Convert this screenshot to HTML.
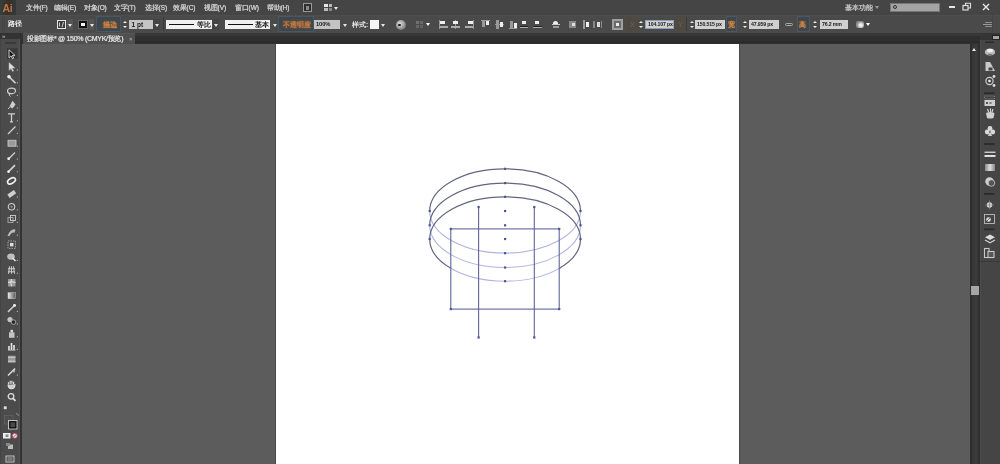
<!DOCTYPE html>
<html><head><meta charset="utf-8">
<style>
*{margin:0;padding:0;box-sizing:border-box}
html,body{width:1000px;height:464px;overflow:hidden;background:#595959;font-family:"Liberation Sans",sans-serif}
#root{position:absolute;left:0;top:0;width:1000px;height:464px;overflow:hidden;filter:blur(0.5px)}
.a{position:absolute}
#menubar{left:0;top:0;width:1000px;height:15px;background:#454545}
#ctrl{left:0;top:15px;width:1000px;height:18px;background:#4a4a4a;border-top:1px solid #4e4e4e}
#tabbar{left:0;top:33px;width:1000px;height:11px;background:#2f2f2f}
#tabtop{left:0;top:33px;width:1000px;height:3px;background:#383838}
#tabbot{left:0;top:41px;width:1000px;height:2px;background:#2b2b2b}
#canvas{left:22px;top:44px;width:948px;height:420px;background:#5c5c5c}
#page{left:276px;top:44px;width:463px;height:420px;background:#fff}
#pageL{left:275px;top:44px;width:1px;height:420px;background:#484848}
#pageR{left:739px;top:44px;width:1px;height:420px;background:#484848}
#toolbar{left:0;top:33px;width:22px;height:431px;background:#4b4b4b}
#scroll{left:970px;top:44px;width:10px;height:420px;background:#3a3a3a}
#dock{left:980px;top:40px;width:20px;height:424px;background:#474747}
.mt{position:absolute;top:3px;font-size:6.5px;letter-spacing:-0.1px;line-height:10px;color:#d2d2d2;-webkit-text-stroke:0.15px #d2d2d2;text-shadow:0 0 1px rgba(200,200,200,0.7);white-space:nowrap}
.ct{position:absolute;font-size:7px;line-height:9px;color:#e0e0e0;white-space:nowrap}
.dd{position:absolute;width:0;height:0;border-left:2px solid transparent;border-right:2px solid transparent;border-top:3px solid #e8e8e8}
.up{position:absolute;width:0;height:0;border-left:2px solid transparent;border-right:2px solid transparent;border-bottom:2.6px solid #ececec;margin-top:0.5px;margin-left:0}
.inp{position:absolute;top:20px;height:9px;background:#c4c4c4;font-size:5.2px;line-height:9px;color:#1a1a1a;font-weight:bold;letter-spacing:-0.15px;padding-left:2px;white-space:nowrap;overflow:hidden}
.olab{position:absolute;font-size:6.8px;line-height:9px;color:#d08848;font-weight:bold;text-shadow:0 0 2px rgba(210,130,60,0.7);white-space:nowrap}
.ic{position:absolute;background:#a8a8a8}
.dn{position:absolute;width:0;height:0;border-left:2px solid transparent;border-right:2px solid transparent;border-top:2.6px solid #ececec;margin-left:0}
</style></head><body><div id="root">
<div id="menubar" class="a"></div>
<div id="ctrl" class="a"></div>
<div id="tabbar" class="a"></div>
<div id="tabtop" class="a"></div><div id="tabbot" class="a"></div>
<div id="canvas" class="a"></div>
<div id="page" class="a"></div>
<div id="pageL" class="a"></div>
<div id="pageR" class="a"></div>
<div id="toolbar" class="a"></div>
<div id="scroll" class="a"></div>
<div id="dock" class="a"></div>

<!-- ================= MENU BAR ================= -->
<div class="a" style="left:0;top:0;width:16px;height:15px;background:linear-gradient(90deg,#34403f,#3c3028 40%,#3a3028 60%,#303a3c)"></div>
<div class="a" style="left:2.5px;top:1.5px;font-size:10.5px;line-height:12px;color:#b87846;font-weight:bold;letter-spacing:-0.3px">Ai</div>
<div class="mt" style="left:25.8px">文件(F)</div>
<div class="mt" style="left:53.8px">编辑(E)</div>
<div class="mt" style="left:83.8px">对象(O)</div>
<div class="mt" style="left:113.8px">文字(T)</div>
<div class="mt" style="left:144.8px">选择(S)</div>
<div class="mt" style="left:172.8px">效果(C)</div>
<div class="mt" style="left:203.8px">视图(V)</div>
<div class="mt" style="left:234.8px">窗口(W)</div>
<div class="mt" style="left:266.8px">帮助(H)</div>
<div class="a" style="left:303px;top:3px;width:9px;height:9px;border:1px solid #9a9a9a;background:#2e2e2e"></div>
<div class="a" style="left:306px;top:5.5px;width:3px;height:4px;background:#8a8a8a"></div>
<div class="a" style="left:324px;top:4px;width:4px;height:3px;background:#e6e6e6"></div><div class="a" style="left:328.5px;top:4px;width:3.5px;height:3px;background:#bbb"></div><div class="a" style="left:324px;top:7.5px;width:4px;height:3px;background:#bbb"></div><div class="a" style="left:328.5px;top:7.5px;width:3.5px;height:3px;background:#888"></div>
<div class="dd" style="left:334px;top:6.5px"></div>
<div class="mt" style="left:845px;color:#bdbdbd">基本功能</div>
<div class="dd" style="left:875px;top:6px;border-top-color:#999"></div>
<div class="a" style="left:890px;top:3px;width:50px;height:9px;background:#a4a4a4;border:1px solid #777"></div>
<div class="a" style="left:893px;top:5px;width:4px;height:4px;border:1px solid #333;border-radius:50%"></div>
<div class="a" style="left:949px;top:5.5px;width:6px;height:2px;background:#e6e6e6"></div>
<svg class="a" style="left:962px;top:2px" width="10" height="10"><rect x="1" y="3.5" width="5" height="4.5" fill="none" stroke="#ddd" stroke-width="1.2"/><path d="M3.5 3.5 V1.2 H8.5 V6 H6" fill="none" stroke="#ddd" stroke-width="1.1"/></svg>
<svg class="a" style="left:981px;top:2px" width="10" height="10"><path d="M2 2 L8 8 M8 2 L2 8" stroke="#e6e6e6" stroke-width="1.4"/></svg>

<!-- ================= CONTROL BAR ================= -->
<div class="a" style="left:2px;top:17px;width:1px;height:14px;background:#434343"></div>
<div class="a" style="left:4px;top:17px;width:1px;height:14px;background:#434343"></div>
<div class="ct" style="left:8px;top:19px;color:#f6f6f6;font-size:6.6px;font-weight:bold">路径</div>
<!-- fill swatch -->
<div class="a" style="left:57px;top:20px;width:9px;height:9px;border:1px solid #e8e8e8;background:#3c3c3c"></div>
<svg class="a" style="left:57px;top:20px" width="9" height="9"><path d="M6.5 2 L5 7.2 M2.5 2.5 L2.5 6.5" stroke="#cfcfcf" stroke-width="1"/></svg>
<div class="a" style="left:67px;top:19px;width:6px;height:11px;background:#555"></div>
<div class="dd" style="left:68px;top:24px"></div>
<!-- stroke swatch -->
<div class="a" style="left:78px;top:20px;width:10px;height:9px;background:#666"></div>
<div class="a" style="left:79px;top:21px;width:8px;height:7px;border:2px solid #111;background:#f4f4f4"></div>
<div class="a" style="left:89px;top:19px;width:5px;height:11px;background:#555"></div>
<div class="dd" style="left:90px;top:24px"></div>
<!-- stroke label -->
<div class="a" style="left:96px;top:16px;width:25px;height:16px;background:#41464a;border:1px solid #4a5866"></div>
<div class="olab" style="left:103px;top:20px">描边</div>
<div class="up" style="left:123px;top:20px"></div>
<div class="dn" style="left:123px;top:26px"></div>
<div class="inp" style="left:129px;width:24px;font-size:6.5px;letter-spacing:0;padding-left:2.5px">1 pt</div>
<div class="a" style="left:153px;top:19px;width:7px;height:11px;background:#444"></div>
<div class="dd" style="left:155px;top:24px"></div>
<div class="a" style="left:163px;top:17px;width:1px;height:14px;background:#3a3a3a"></div>
<!-- profile box -->
<div class="a" style="left:166px;top:20px;width:46px;height:9px;background:#f0f0f0"></div>
<div class="a" style="left:169px;top:24px;width:25px;height:1px;background:#111"></div>
<div class="ct" style="left:197px;top:20px;color:#151515;font-weight:bold;font-size:6.6px">等比</div>
<div class="a" style="left:212px;top:19px;width:7px;height:11px;background:#444"></div>
<div class="dd" style="left:214px;top:24px"></div>
<!-- brush box -->
<div class="a" style="left:225px;top:20px;width:45px;height:9px;background:#f0f0f0"></div>
<div class="a" style="left:228px;top:24px;width:25px;height:1px;background:#111"></div>
<div class="ct" style="left:255px;top:20px;color:#151515;font-weight:bold;font-size:6.6px">基本</div>
<div class="dd" style="left:273px;top:24px"></div>
<!-- opacity label -->
<div class="a" style="left:278px;top:16px;width:36px;height:16px;background:#41464a;border:1px solid #4a5866"></div>
<div class="olab" style="left:283px;top:20px;color:#c07a40;text-shadow:0 0 2.5px rgba(200,120,60,0.9)">不透明度</div>
<div class="inp" style="left:314px;width:26px;font-size:5.8px;letter-spacing:-0.1px">100%</div>
<div class="dd" style="left:343px;top:24px"></div>
<div class="ct" style="left:352px;top:20px;color:#e6e6e6;font-weight:bold;font-size:6.6px">样式:</div>
<div class="a" style="left:370px;top:20px;width:9px;height:9px;background:#f4f4f4"></div>
<div class="dd" style="left:381px;top:24px"></div>
<div class="a" style="left:396px;top:19.5px;width:10px;height:10px;border-radius:50%;background:radial-gradient(circle at 40% 40%,#e0e0e0 0,#b0b0b0 35%,#707070 80%,#555 100%)"></div><div class="a" style="left:398px;top:23.5px;width:2.5px;height:2.5px;border-radius:50%;background:#222"></div>

<!-- icons after recolor -->
<div class="a" style="left:416px;top:21px;width:3px;height:3px;background:#707070"></div>
<div class="a" style="left:420px;top:21px;width:3px;height:3px;background:#6a6a6a"></div>
<div class="a" style="left:416px;top:25px;width:3px;height:3px;background:#666"></div>
<div class="a" style="left:420px;top:25px;width:3px;height:3px;background:#606060"></div>
<div class="dd" style="left:426px;top:23px;border-top-color:#fff"></div>
<!-- align icons -->
<div class="a" style="left:439px;top:20px;width:1px;height:9px;background:#999"></div>
<div class="a" style="left:440px;top:21px;width:5px;height:3px;background:#eee"></div>
<div class="a" style="left:440px;top:26px;width:8px;height:2px;background:#aaa"></div>
<div class="a" style="left:455px;top:20px;width:1px;height:9px;background:#999"></div>
<div class="a" style="left:453px;top:21px;width:5px;height:3px;background:#eee"></div>
<div class="a" style="left:451px;top:26px;width:9px;height:2px;background:#aaa"></div>
<div class="a" style="left:473px;top:20px;width:1px;height:9px;background:#999"></div>
<div class="a" style="left:468px;top:21px;width:5px;height:3px;background:#eee"></div>
<div class="a" style="left:465px;top:26px;width:8px;height:2px;background:#aaa"></div>
<div class="a" style="left:481px;top:20px;width:9px;height:1px;background:#999"></div>
<div class="a" style="left:482px;top:21px;width:3px;height:6px;background:#999"></div>
<div class="a" style="left:486px;top:21px;width:3px;height:4px;background:#eee"></div>
<div class="a" style="left:495px;top:24px;width:9px;height:1px;background:#999"></div>
<div class="a" style="left:496px;top:20px;width:3px;height:9px;background:#999"></div>
<div class="a" style="left:500px;top:22px;width:3px;height:5px;background:#eee"></div>
<div class="a" style="left:509px;top:28px;width:8px;height:1px;background:#999"></div>
<div class="a" style="left:510px;top:21px;width:3px;height:7px;background:#999"></div>
<div class="a" style="left:514px;top:23px;width:3px;height:5px;background:#eee"></div>
<div class="a" style="left:522px;top:21px;width:4px;height:3px;background:#eee"></div>
<div class="a" style="left:520px;top:26px;width:8px;height:1px;background:#222"></div>
<div class="a" style="left:520px;top:27px;width:8px;height:1px;background:#aaa"></div>
<div class="a" style="left:535px;top:21px;width:4px;height:3px;background:#eee"></div>
<div class="a" style="left:533px;top:26px;width:9px;height:1px;background:#222"></div>
<div class="a" style="left:533px;top:27px;width:9px;height:1px;background:#aaa"></div>
<div class="a" style="left:553px;top:21px;width:5px;height:3px;border-radius:3px 3px 0 0;background:#eee"></div>
<div class="a" style="left:552px;top:24px;width:8px;height:1px;background:#ccc"></div>
<div class="a" style="left:553px;top:26px;width:6px;height:2px;background:#999"></div>
<div class="a" style="left:569px;top:21px;width:7px;height:7px;background:#888"></div>
<div class="a" style="left:572px;top:23px;width:3px;height:3px;background:#ddd"></div>
<div class="a" style="left:583px;top:20px;width:2px;height:9px;background:#999"></div>
<div class="a" style="left:586px;top:22px;width:3px;height:5px;background:#eee"></div>
<div class="a" style="left:593px;top:21px;width:2px;height:7px;background:#888"></div>
<div class="a" style="left:597px;top:22px;width:3px;height:5px;background:#ddd"></div>
<div class="a" style="left:601px;top:21px;width:1px;height:7px;background:#888"></div>
<!-- transform icon -->
<div class="a" style="left:612px;top:19px;width:11px;height:11px;border:2px solid #a0a0a0;background:#6a6a6a"></div>
<div class="a" style="left:616px;top:23px;width:3px;height:3px;background:#eee"></div>
<!-- X -->
<div class="a" style="left:624px;top:16px;width:16px;height:16px;background:#4e4942"></div>
<div class="ct" style="left:630px;top:20px;color:#6e6254">X</div>
<div class="up" style="left:639px;top:20px"></div>
<div class="dn" style="left:639px;top:26px"></div>
<div class="inp" style="left:645px;width:29px;border:1px solid #8ea0b8;line-height:7px;background:#d0d0d0">104.107 px</div>
<div class="a" style="left:675px;top:16px;width:11px;height:16px;background:#4e4942"></div>
<div class="ct" style="left:678px;top:20px;color:#6e6254">Y</div>
<div class="a" style="left:686px;top:17px;width:1px;height:14px;background:#3a3a3a"></div>
<div class="up" style="left:690px;top:20px"></div>
<div class="dn" style="left:690px;top:26px"></div>
<div class="inp" style="left:695px;width:30px;line-height:9px;background:#d0d0d0">150.515 px</div>
<!-- W -->
<div class="a" style="left:726px;top:16px;width:11px;height:16px;background:#41464a;border:1px solid #4a5866"></div>
<div class="olab" style="left:728px;top:20px">宽</div>
<div class="up" style="left:743px;top:20px"></div>
<div class="dn" style="left:743px;top:26px"></div>
<div class="inp" style="left:749px;width:30px;background:#d0d0d0">47.959 px</div>
<div class="a" style="left:785px;top:23px;width:8px;height:3px;border:1px solid #aaa;border-radius:2px"></div>
<!-- H -->
<div class="a" style="left:797px;top:16px;width:13px;height:16px;background:#41464a;border:1px solid #4a5866"></div>
<div class="olab" style="left:799px;top:20px">高</div>
<div class="up" style="left:813px;top:20px"></div>
<div class="dn" style="left:813px;top:26px"></div>
<div class="inp" style="left:820px;width:28px;background:#d0d0d0">76.2 mm</div>
<div class="a" style="left:856px;top:21px;width:8px;height:7px;border-radius:2px;background:radial-gradient(circle at 60% 60%,#eee 20%,#888 60%)"></div>
<div class="dd" style="left:866px;top:23px;border-top-color:#fff"></div>
<!-- control bar right menu -->
<div class="a" style="left:985px;top:22px;width:7px;height:1px;background:#8e8e8e"></div>
<div class="a" style="left:983px;top:24px;width:9px;height:1px;background:#9a9a9a"></div>
<div class="a" style="left:985px;top:26px;width:7px;height:1px;background:#8e8e8e"></div>
<div class="a" style="left:992px;top:15px;width:1px;height:18px;background:#434343"></div>

<!-- ================= TOOLBAR ================= -->
<div class="a" style="left:0;top:33px;width:21px;height:6px;background:#333"></div>
<div class="a" style="left:2px;top:34px;font-size:6px;line-height:5px;color:#ccc">»</div>
<div class="a" style="left:0;top:39px;width:20px;height:425px;background:#4b4b4b;border-left:1px solid #444;border-right:1px solid #555"></div>
<div class="a" style="left:5px;top:42px;width:11px;height:2px;background:#3a3a3a"></div>
<div class="a" style="left:20px;top:33px;width:2px;height:431px;background:#333"></div>
<svg class="a" style="left:0;top:0" width="22" height="464" viewBox="0 0 22 464"><defs><linearGradient id="grd"><stop offset="0" stop-color="#eee"/><stop offset="1" stop-color="#555"/></linearGradient></defs><g transform="matrix(1,0,0,0.99655,0,1.47)"><rect x="7" y="47.0" width="10.5" height="10.5" fill="#383838"/><g transform="translate(6.5,47.50)"><path d="M2.5 1 L2.5 9 L4.5 7 L6 10 L7.2 9.4 L5.8 6.6 L8.5 6.6 Z" fill="#111" stroke="#ddd" stroke-width="0.9"/></g><g transform="translate(6.5,60.25)"><path d="M2.5 1 L2.5 9 L4.5 7 L6 10 L7.2 9.4 L5.8 6.6 L8.5 6.6 Z" fill="#e0e0e0" stroke="#aaa" stroke-width="0.5"/></g><path d="M16.5 69.25 l1.5 0 l0 -1.5z" fill="#bbb"/><g transform="translate(6.5,73.00)"><path d="M2 2 L9 9" stroke="#cfcfcf" stroke-width="1.6"/><circle cx="2.5" cy="2.5" r="1.8" fill="#eee"/></g><path d="M16.5 82.00 l1.5 0 l0 -1.5z" fill="#bbb"/><g transform="translate(6.5,85.75)"><ellipse cx="5" cy="4" rx="4" ry="2.8" fill="none" stroke="#cfcfcf" stroke-width="1.2"/><path d="M3 6 Q2 9 4 9.5" fill="none" stroke="#cfcfcf" stroke-width="1"/></g><path d="M16.5 94.75 l1.5 0 l0 -1.5z" fill="#bbb"/><g transform="translate(6.5,98.50)"><path d="M6 1 L9 5 L6 9 L3 7 Z" fill="#cfcfcf"/><path d="M1.5 9.5 L4 7" stroke="#cfcfcf" stroke-width="1"/></g><path d="M16.5 107.50 l1.5 0 l0 -1.5z" fill="#bbb"/><g transform="translate(6.5,111.25)"><path d="M1.5 1.5 H8.5 M5 1.5 V9.5 M3.5 9.5 H6.5" stroke="#cfcfcf" stroke-width="1.3" fill="none"/></g><path d="M16.5 120.25 l1.5 0 l0 -1.5z" fill="#bbb"/><g transform="translate(6.5,124.00)"><path d="M1.5 9 L9 1.5" stroke="#cfcfcf" stroke-width="1.2"/></g><path d="M16.5 133.00 l1.5 0 l0 -1.5z" fill="#bbb"/><g transform="translate(6.5,136.75)"><rect x="1.5" y="2.5" width="8" height="6" fill="#9a9a9a" stroke="#cfcfcf" stroke-width="0.8"/></g><path d="M16.5 145.75 l1.5 0 l0 -1.5z" fill="#bbb"/><g transform="translate(6.5,149.50)"><path d="M1.5 9 L8.5 2" stroke="#cfcfcf" stroke-width="1.3"/><circle cx="2.2" cy="8.3" r="1.4" fill="#eee"/></g><path d="M16.5 158.50 l1.5 0 l0 -1.5z" fill="#bbb"/><g transform="translate(6.5,162.25)"><path d="M1.5 9 L8.5 2" stroke="#cfcfcf" stroke-width="1.8"/><circle cx="2" cy="8.5" r="1.2" fill="#fff"/></g><path d="M16.5 171.25 l1.5 0 l0 -1.5z" fill="#bbb"/><g transform="translate(6.5,175.00)"><ellipse cx="5" cy="5" rx="4.3" ry="2.5" transform="rotate(-30 5 5)" fill="none" stroke="#eee" stroke-width="1.6"/></g><g transform="translate(6.5,187.75)"><rect x="1" y="3.5" width="8" height="4" transform="rotate(-35 5 5)" fill="#cfcfcf"/></g><path d="M16.5 196.75 l1.5 0 l0 -1.5z" fill="#bbb"/><g transform="translate(6.5,200.50)"><circle cx="5" cy="5.5" r="3.2" fill="none" stroke="#cfcfcf" stroke-width="1.1"/><circle cx="5" cy="5.5" r="1" fill="#999"/></g><path d="M16.5 209.50 l1.5 0 l0 -1.5z" fill="#bbb"/><g transform="translate(6.5,213.25)"><rect x="1.5" y="3.5" width="5" height="5" fill="none" stroke="#aaa" stroke-width="0.9"/><rect x="4" y="1.5" width="5" height="5" fill="none" stroke="#cfcfcf" stroke-width="0.9"/></g><path d="M16.5 222.25 l1.5 0 l0 -1.5z" fill="#bbb"/><g transform="translate(6.5,226.00)"><path d="M1 9 Q5 1 9 3 L8 6 Q5 5 3 9.5Z" fill="#bbb"/></g><path d="M16.5 235.00 l1.5 0 l0 -1.5z" fill="#bbb"/><g transform="translate(6.5,238.75)"><rect x="1.5" y="1.5" width="7.5" height="7.5" fill="none" stroke="#aaa" stroke-width="0.9" stroke-dasharray="1.5 1"/><rect x="3.5" y="3.5" width="3.5" height="3.5" fill="#ddd"/></g><g transform="translate(6.5,251.50)"><ellipse cx="4.5" cy="4.5" rx="3.8" ry="3.2" fill="#bdbdbd"/><path d="M6 6 L9 9" stroke="#eee" stroke-width="1.4"/></g><path d="M16.5 260.50 l1.5 0 l0 -1.5z" fill="#bbb"/><g transform="translate(6.5,264.25)"><path d="M2 9 L3 1.5 M5 9 V1.5 M8 9 L7 1.5 M1.5 4 H8.5 M1.5 7 H8.5" stroke="#cfcfcf" stroke-width="1" fill="none"/></g><path d="M16.5 273.25 l1.5 0 l0 -1.5z" fill="#bbb"/><g transform="translate(6.5,277.00)"><rect x="1.5" y="1.5" width="7.5" height="7.5" fill="#999"/><path d="M1.5 5 Q5 3.5 9 5 M5 1.5 Q3.8 5 5 9" stroke="#eee" stroke-width="0.9" fill="none"/></g><g transform="translate(6.5,289.75)"><rect x="1.5" y="2.5" width="7.5" height="6" fill="url(#grd)" stroke="#ccc" stroke-width="0.5"/></g><g transform="translate(6.5,302.50)"><path d="M1.5 9 L7.5 3" stroke="#cfcfcf" stroke-width="1.5"/><circle cx="8" cy="2.5" r="1.5" fill="#eee"/></g><path d="M16.5 311.50 l1.5 0 l0 -1.5z" fill="#bbb"/><g transform="translate(6.5,315.25)"><circle cx="3.5" cy="4" r="2.6" fill="#c4c4c4"/><circle cx="7" cy="6.5" r="2.3" fill="#2a2a2a" stroke="#bbb" stroke-width="0.8"/></g><path d="M16.5 324.25 l1.5 0 l0 -1.5z" fill="#bbb"/><g transform="translate(6.5,328.00)"><rect x="2.5" y="4" width="5.5" height="5.5" fill="#c4c4c4"/><rect x="4" y="1.5" width="2.5" height="2.5" fill="#ddd"/></g><path d="M16.5 337.00 l1.5 0 l0 -1.5z" fill="#bbb"/><g transform="translate(6.5,340.75)"><path d="M2.5 9 V5 M5 9 V2 M7.5 9 V4" stroke="#e6e6e6" stroke-width="1.6"/><path d="M1.5 9.3 H9" stroke="#bbb" stroke-width="0.8"/></g><path d="M16.5 349.75 l1.5 0 l0 -1.5z" fill="#bbb"/><g transform="translate(6.5,353.50)"><rect x="1.5" y="2" width="7.5" height="7" fill="#9a9a9a"/><path d="M1.5 3.5 H9 M1.5 7.5 H9" stroke="#ddd" stroke-width="0.8"/></g><g transform="translate(6.5,366.25)"><path d="M1.5 9 L8.5 2" stroke="#ddd" stroke-width="1.4"/><path d="M5 5.5 L9 2.5 L8 6Z" fill="#bbb"/></g><path d="M16.5 375.25 l1.5 0 l0 -1.5z" fill="#bbb"/><g transform="translate(6.5,379.00)"><path d="M2 5 V3 M3.7 4.5 V1.5 M5.4 4.5 V1.5 M7.1 5 V2.5 M1.5 5.5 Q2 9.5 5 9.5 Q8.5 9.5 8.5 5" stroke="#ddd" stroke-width="1.2" fill="#ccc"/></g><g transform="translate(6.5,391.75)"><circle cx="4.5" cy="4.5" r="2.8" fill="none" stroke="#ddd" stroke-width="1.3"/><path d="M6.5 6.5 L9 9" stroke="#ddd" stroke-width="1.8"/></g></g>
<rect x="3.5" y="406" width="3.5" height="3.5" fill="#ddd" stroke="#333" stroke-width="0.5"/>
<rect x="4.5" y="415.5" width="8.5" height="8.5" fill="#4e4e4e" stroke="#626262" stroke-width="0.8"/>
<rect x="8.5" y="420.5" width="8.5" height="8.5" fill="#4a4a4a" stroke="#d0d0d0" stroke-width="0.9"/>
<rect x="9.8" y="421.8" width="5.9" height="5.9" fill="none" stroke="#151515" stroke-width="1.3"/>
<path d="M16 413.5 q2.5 0 2.5 2.5" stroke="#aaa" stroke-width="0.7" fill="none"/>
<rect x="3" y="433" width="7.5" height="5.5" fill="#eee"/>
<rect x="5.5" y="434.5" width="3" height="2.5" fill="#888"/>
<circle cx="14.8" cy="435.8" r="2.5" fill="#f0e8ea" stroke="#c04a60" stroke-width="0.9"/>
<path d="M13.1 437.5 L16.5 434.1" stroke="#c04a60" stroke-width="1"/>
<rect x="8" y="444.5" width="5" height="4.5" fill="#bbb"/>
<rect x="6" y="443" width="4" height="3" fill="#888"/>
<rect x="6" y="456" width="8" height="6" fill="none" stroke="#ccc" stroke-width="0.9"/>
<path d="M7.5 458 H12.5 M7.5 460 H12.5" stroke="#bbb" stroke-width="0.8"/>
</svg>
<!-- ================= TAB BAR ================= -->
<div class="a" style="left:23px;top:33px;width:112px;height:11px;background:#505050;border-top:1px solid #565656"></div>
<div class="a" style="left:27px;top:34px;font-size:7px;line-height:10px;color:#e2e2e2;-webkit-text-stroke:0.15px #e2e2e2;text-shadow:0 0 1px rgba(210,210,210,0.6);white-space:nowrap;letter-spacing:-0.28px">投影图标* @ 150% (CMYK/预览)</div>
<div class="a" style="left:129px;top:34px;font-size:6px;line-height:10px;color:#bbb">×</div>

<!-- ================= SCROLL + DOCK ================= -->
<div class="a" style="left:970px;top:44px;width:10px;height:420px;background:linear-gradient(90deg,#2e2e2e 0,#2e2e2e 1.5px,#363636 1.5px,#3a3a3a 5px,#3d3d3d 7px,#303030 8px,#2e2e2e 10px)"></div>
<div class="a" style="left:972px;top:48px;width:0;height:0;border-left:2.5px solid transparent;border-right:2.5px solid transparent;border-bottom:3px solid #e8e8e8"></div>
<div class="a" style="left:971px;top:286px;width:8px;height:9px;background:#a6a6a6"></div>
<div class="a" style="left:980px;top:40px;width:20px;height:424px;background:#454545;border-left:1px solid #4c4c4c"></div>
<div class="a" style="left:980px;top:33px;width:20px;height:7px;background:#353535"></div>
<div class="a" style="left:993px;top:35.5px;width:5.5px;height:3px;background:#a4a4a4;outline:0.5px solid #222"></div>
<div class="a" style="left:980px;top:261px;width:20px;height:1px;background:#3a3a3a"></div>
<svg class="a" style="left:980px;top:0" width="20" height="464" viewBox="980 0 20 464">
<g fill="#2a2a2a">
<rect x="985" y="41.5" width="9" height="1.5"/>
<rect x="984" y="92.4" width="10.5" height="1.7"/>
<rect x="984" y="143.2" width="10.5" height="1.7"/>
<rect x="984" y="193" width="10.5" height="1.7"/>
<rect x="984" y="228.5" width="10.5" height="1.7"/>
</g>
<!-- color -->
<ellipse cx="990" cy="52" rx="5.2" ry="3.6" fill="#bdbdbd"/>
<ellipse cx="990" cy="50.5" rx="3" ry="1.8" fill="#f0f0f0"/>
<ellipse cx="990" cy="54.5" rx="2.5" ry="0.8" fill="#777"/>
<!-- color guide -->
<path d="M985.5 62 L990 62 L995 71 L985.5 71 Z" fill="#c8c8c8"/>
<rect x="988.5" y="67.5" width="4" height="3" fill="#444"/>
<!-- third -->
<circle cx="989.5" cy="81" r="3.6" fill="none" stroke="#ccc" stroke-width="1.2"/>
<circle cx="989.5" cy="81" r="1.3" fill="#eee"/>
<circle cx="994" cy="76.5" r="1.4" fill="#ddd"/>
<circle cx="994" cy="85.5" r="1.4" fill="#ddd"/>
<!-- swatches -->
<rect x="984.5" y="96" width="10" height="3" fill="none" stroke="#999" stroke-width="0.7" stroke-dasharray="1 1"/>
<rect x="984.5" y="100" width="10.5" height="6" fill="#cfcfcf"/>
<rect x="986" y="102" width="2" height="2" fill="#555"/><rect x="989.5" y="102" width="2" height="2" fill="#777"/>
<!-- brushes -->
<path d="M987.5 109 L988.5 112 M990.5 108.5 L990.5 112 M993 109 L992 112" stroke="#ddd" stroke-width="1.1"/>
<path d="M986 113 Q990 111 994.5 113 L993.5 118 Q990 119 987 118 Z" fill="#d0d0d0"/>
<!-- symbols -->
<circle cx="990" cy="128.5" r="2.4" fill="#d8d8d8"/>
<circle cx="987.2" cy="132" r="2.4" fill="#d8d8d8"/>
<circle cx="992.8" cy="132" r="2.4" fill="#d8d8d8"/>
<path d="M989 133 L988 136 H992 L991 133Z" fill="#ccc"/>
<!-- stroke -->
<rect x="984.5" y="151.6" width="11" height="1.3" fill="#d8d8d8"/>
<rect x="984.5" y="155" width="11" height="1.9" fill="#e8e8e8"/>
<!-- gradient -->
<rect x="985" y="164" width="10" height="7" fill="url(#g2)"/>
<defs><linearGradient id="g2"><stop offset="0" stop-color="#888"/><stop offset="0.5" stop-color="#ddd"/><stop offset="1" stop-color="#888"/></linearGradient></defs>
<!-- transparency -->
<circle cx="989.5" cy="181.5" r="4.2" fill="#cfcfcf"/>
<circle cx="991.5" cy="183" r="3.3" fill="#555" stroke="#ddd" stroke-width="0.7"/>
<!-- appearance -->
<circle cx="989.5" cy="205" r="2.7" fill="#dcdcdc"/>
<path d="M989.5 200.5 V209.5 M985 205 H994" stroke="#888" stroke-width="0.8"/>
<!-- graphic styles -->
<rect x="984.5" y="214.5" width="10" height="9" fill="none" stroke="#bbb" stroke-width="0.9"/>
<circle cx="988.5" cy="219.5" r="2.3" fill="#ddd"/>
<path d="M987 221 L991 217" stroke="#555" stroke-width="0.8"/>
<!-- layers -->
<path d="M990 234.5 L995 237.3 L990 240 L985 237.3 Z" fill="#dadada"/>
<path d="M985 240 L990 242.7 L995 240" fill="none" stroke="#cfcfcf" stroke-width="1.2"/>
<!-- artboards -->
<rect x="984.5" y="248.5" width="4.5" height="9" fill="none" stroke="#c8c8c8" stroke-width="1.1"/>
<rect x="988" y="251.5" width="6" height="6" fill="#555" stroke="#c8c8c8" stroke-width="1.1"/>
</svg>

<!-- drawing -->
<svg class="a" style="left:0;top:0" width="1000" height="464" viewBox="0 0 1000 464"><g fill="none" stroke-width="1.1"><path d="M429.70000000000005 211.0 A75.4 42.2 0 0 0 580.5 211.0" stroke="#b2b4de"/><path d="M429.70000000000005 225.3 A75.4 42.2 0 0 0 580.5 225.3" stroke="#b2b4de"/><path d="M450.8 268.28 A75.4 42.2 0 0 0 559.2 268.39" stroke="#b2b4de"/><path d="M429.7 239.0 A75.4 42.2 0 0 0 450.8 268.28" stroke="#62667f" stroke-width="1.2"/><path d="M559.2 268.39 A75.4 42.2 0 0 0 580.5 239.0" stroke="#62667f" stroke-width="1.2"/><path d="M429.7 211.0 A75.4 42.2 0 0 1 580.5 211.0" stroke="#62667f" stroke-width="1.2"/><path d="M429.7 225.3 A75.4 42.2 0 0 1 580.5 225.3" stroke="#62667f" stroke-width="1.2"/><path d="M429.7 239.0 A75.4 42.2 0 0 1 580.5 239.0" stroke="#62667f" stroke-width="1.2"/><rect x="450.8" y="228.9" width="108.4" height="80.2" stroke="#60649a"/><path d="M478.6 207 V337.5 M534.3 207 V337.5" stroke="#60649a"/></g><g fill="#4c5494"><rect x="428.60" y="209.90" width="2.2" height="2.2"/><rect x="579.40" y="209.90" width="2.2" height="2.2"/><rect x="504.00" y="167.70" width="2.2" height="2.2"/><rect x="504.00" y="252.10" width="2.2" height="2.2"/><rect x="504.00" y="209.90" width="2.2" height="2.2"/><rect x="428.60" y="224.20" width="2.2" height="2.2"/><rect x="579.40" y="224.20" width="2.2" height="2.2"/><rect x="504.00" y="182.00" width="2.2" height="2.2"/><rect x="504.00" y="266.40" width="2.2" height="2.2"/><rect x="504.00" y="224.20" width="2.2" height="2.2"/><rect x="428.60" y="237.90" width="2.2" height="2.2"/><rect x="579.40" y="237.90" width="2.2" height="2.2"/><rect x="504.00" y="195.70" width="2.2" height="2.2"/><rect x="504.00" y="280.10" width="2.2" height="2.2"/><rect x="504.00" y="237.90" width="2.2" height="2.2"/><rect x="449.70" y="227.80" width="2.2" height="2.2"/><rect x="558.10" y="227.80" width="2.2" height="2.2"/><rect x="449.70" y="308.00" width="2.2" height="2.2"/><rect x="558.10" y="308.00" width="2.2" height="2.2"/><rect x="477.50" y="205.90" width="2.2" height="2.2"/><rect x="533.20" y="205.90" width="2.2" height="2.2"/><rect x="477.50" y="336.40" width="2.2" height="2.2"/><rect x="533.20" y="336.40" width="2.2" height="2.2"/></g></svg>
</div></body></html>
